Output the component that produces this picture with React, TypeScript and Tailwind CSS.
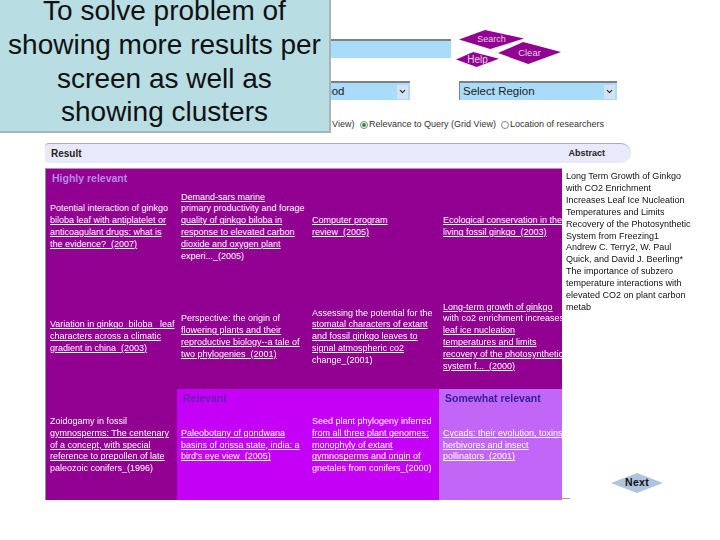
import { ChevronDown } from 'lucide-react';

type Line = [string, boolean?];

const cells: { lines: Line[]; bg: string; label?: string; labelColor?: string }[] = [
  {
    bg: 'bg-[#910091]',
    label: 'Highly relevant',
    labelColor: 'text-[#b58ae6]',
    lines: [
      ['Potential interaction of ginkgo'],
      ['biloba leaf with antiplatelet or', true],
      ['anticoagulant drugs: what is', true],
      ['the evidence?_(2007)', true],
    ],
  },
  {
    bg: 'bg-[#910091]',
    lines: [
      ['Demand-sars marine', true],
      ['primary productivity and forage'],
      ['quality of ginkgo biloba in', true],
      ['response to elevated carbon', true],
      ['dioxide and oxygen plant', true],
      ['experi..._(2005)'],
    ],
  },
  {
    bg: 'bg-[#910091]',
    lines: [
      ['Computer program', true],
      ['review_(2005)', true],
    ],
  },
  {
    bg: 'bg-[#910091]',
    lines: [
      ['Ecological conservation in the', true],
      ['living fossil ginkgo_(2003)', true],
    ],
  },
  {
    bg: 'bg-[#910091]',
    lines: [
      ['Variation in ginkgo_biloba_ leaf', true],
      ['characters across a climatic', true],
      ['gradient in china_(2003)', true],
    ],
  },
  {
    bg: 'bg-[#910091]',
    lines: [
      ['Perspective: the origin of'],
      ['flowering plants and their', true],
      ['reproductive biology--a tale of', true],
      ['two phylogenies_(2001)', true],
    ],
  },
  {
    bg: 'bg-[#910091]',
    lines: [
      ['Assessing the potential for the'],
      ['stomatal characters of extant', true],
      ['and fossil ginkgo leaves to', true],
      ['signal atmospheric co2', true],
      ['change_(2001)'],
    ],
  },
  {
    bg: 'bg-[#910091]',
    lines: [
      ['Long-term growth of ginkgo', true],
      ['with co2 enrichment increases'],
      ['leaf ice nucleation', true],
      ['temperatures and limits', true],
      ['recovery of the photosynthetic', true],
      ['system f..._(2000)', true],
    ],
  },
  {
    bg: 'bg-[#910091]',
    lines: [
      ['Zoidogamy in fossil'],
      ['gymnosperms: The centenary', true],
      ['of a concept, with special', true],
      ['reference to prepollen of late', true],
      ['paleozoic conifers_(1996)'],
    ],
  },
  {
    bg: 'bg-[#c400f7]',
    label: 'Relevant',
    labelColor: 'text-[#6a1fb0]',
    lines: [
      ['Paleobotany of gondwana', true],
      ['basins of orissa state, india: a', true],
      ["bird's eye view_(2005)", true],
    ],
  },
  {
    bg: 'bg-[#c400f7]',
    lines: [
      ['Seed plant phylogeny inferred'],
      ['from all three plant genomes:', true],
      ['monophyly of extant', true],
      ['gymnosperms and origin of', true],
      ['gnetales from conifers_(2000)'],
    ],
  },
  {
    bg: 'bg-[#c266f7]',
    label: 'Somewhat relevant',
    labelColor: 'text-[#34209a]',
    lines: [
      ['Cycads: their evolution, toxins,', true],
      ['herbivores and insect', true],
      ['pollinators_(2001)', true],
    ],
  },
];

const abstractLines = [
  'Long Term Growth of Ginkgo',
  'with CO2 Enrichment',
  'Increases Leaf Ice Nucleation',
  'Temperatures and Limits',
  'Recovery of the Photosynthetic',
  'System from Freezing1',
  'Andrew C. Terry2, W. Paul',
  'Quick, and David J. Beerling*',
  'The importance of subzero',
  'temperature interactions with',
  'elevated CO2 on plant carbon',
  'metab',
];

function Diamond({
  label,
  className,
  color,
  text,
  points = '0,50 40,0 100,45 48,100',
}: {
  label: string;
  className: string;
  color: string;
  text: string;
  points?: string;
}) {
  return (
    <div className={`flex items-center justify-center ${className}`}>
      <svg className="absolute inset-0 h-full w-full" viewBox="0 0 100 100" preserveAspectRatio="none">
        <polygon points={points} fill={color} />
      </svg>
      <span className={`relative ${text}`}>{label}</span>
    </div>
  );
}

function FakeSelect({ label, className }: { label: string; className: string }) {
  return (
    <div className={`flex h-[19px] items-center justify-between border-t-2 border-t-[#808080] bg-[#a9dcfb] pr-[2px] ${className}`}>
      <span className="text-[11.5px] text-[#222]">{label}</span>
      <span className="flex h-[14px] w-[11px] items-center justify-center bg-[#d5e3f0]">
        <ChevronDown size={9} strokeWidth={3} color="#223" />
      </span>
    </div>
  );
}

function Radio({ on }: { on?: boolean }) {
  return (
    <span className="mr-[1px] flex h-[8px] w-[8px] items-center justify-center rounded-full border border-[#7a8a7a] bg-white">
      {on && <span className="h-[4px] w-[4px] rounded-full bg-[#2e8b57]" />}
    </span>
  );
}

export default function App() {
  return (
    <div className="relative h-[540px] w-[720px] overflow-hidden bg-white font-['Liberation_Sans',Arial,sans-serif]">
      <div className="absolute left-0 top-0 z-10 flex h-[133px] w-[331px] flex-col items-center justify-center border-b-2 border-r-2 border-[#a9b4b6] bg-[#b8dde2] pb-[8px] text-center text-[28px] leading-[33.6px] text-[#111]">
        <div>To solve problem of</div>
        <div>showing more results per</div>
        <div>screen as well as</div>
        <div>showing clusters</div>
      </div>

      <div className="flex flex-col pl-[45px] pt-[30px]">
        <div className="flex h-[37px] items-center">
          <div className="ml-[155px] h-[19px] w-[251px] border-t-2 border-t-[#808080] bg-[#a9dcfb]" />
          <div className="relative ml-[5px] h-[37px] w-[105px]">
            <Diamond label="Search" className="absolute left-[3px] top-0 h-[19px] w-[65px]" color="#910091" text="text-[9px] text-[#e8d0e8]" />
            <Diamond label="Clear" className="absolute left-[42px] top-[12px] h-[22px] w-[63px]" color="#910091" text="text-[9.5px] text-[#e8d0e8]" />
            <Diamond label="Help" className="absolute left-0 top-[22px] h-[15px] w-[43px]" color="#910091" text="text-[10px] text-[#e8d0e8]" />
          </div>
        </div>

        <div className="mt-[14px] flex">
          <FakeSelect label="Select Method" className="ml-[155px] w-[210px] pl-[71px]" />
          <FakeSelect label="Select Region" className="ml-[49px] w-[158px] border-l border-l-[#808080] pl-[3px]" />
        </div>

        <div className="mt-[17px] flex h-[15px] items-center whitespace-nowrap text-[9px] text-[#333]">
          <span className="ml-[190px] w-[116px] text-right">Relevance by Year (List View)</span>
          <span className="ml-[9px] flex w-[141px] items-center">
            <Radio on />
            Relevance to Query (Grid View)
          </span>
          <span className="flex items-center">
            <Radio />
            Location of researchers
          </span>
        </div>

        <div className="mt-[11px] flex h-[20px] w-[586px] items-center justify-between rounded-l-[4px] rounded-r-[10px] border-t border-t-[#a8a8c8] bg-[#e8eafc] pl-[6px] pr-[26px] text-[10px] font-bold text-[#222]">
          <span>Result</span>
          <span className="text-[9px]">Abstract</span>
        </div>

        <div className="mt-[5px] flex">
          <div className="grid h-[332px] w-[517px] grid-cols-[131px_131px_131px_123px] grid-rows-[114px_106px_111px] overflow-hidden border-l border-t border-l-[#909090] border-t-[#c48ab0] blur-[0.3px]">
            {cells.map((cell, i) => (
              <div key={i} className={`grid items-center overflow-hidden pl-[4px] text-[9px] leading-[11.8px] text-white ${cell.bg}`}>
                {cell.label && (
                  <div className={`[grid-area:1/1] self-start pl-[2px] pt-[4px] text-[10.5px] font-bold ${cell.labelColor}`}>{cell.label}</div>
                )}
                <div className="[grid-area:1/1] whitespace-nowrap pt-[2px]">
                  {cell.lines.map(([text, link]) => (
                    <div key={text} className={link ? 'underline' : ''}>
                      {text}
                    </div>
                  ))}
                </div>
              </div>
            ))}
          </div>

          <div className="flex h-[332px] w-[150px] flex-col">
            <div className="pl-[4px] pt-[3px] whitespace-nowrap text-[9px] leading-[11.9px] text-[#111] blur-[0.3px]">
              {abstractLines.map((line) => (
                <div key={line}>{line}</div>
              ))}
            </div>
            <div className="relative ml-[49px] mt-[159px] h-[20px] w-[52px]">
              <Diamond
                label="Next"
                className="absolute inset-0"
                color="#b0c4de"
                text="text-[10.5px] font-bold tracking-[0.3px] text-[#111]"
                points="0,50 50,0 100,50 50,100"
              />
            </div>
            <div className="mt-[5px] h-px w-[8px] bg-[#a0a0a0]" />
          </div>
        </div>
      </div>
    </div>
  );
}
